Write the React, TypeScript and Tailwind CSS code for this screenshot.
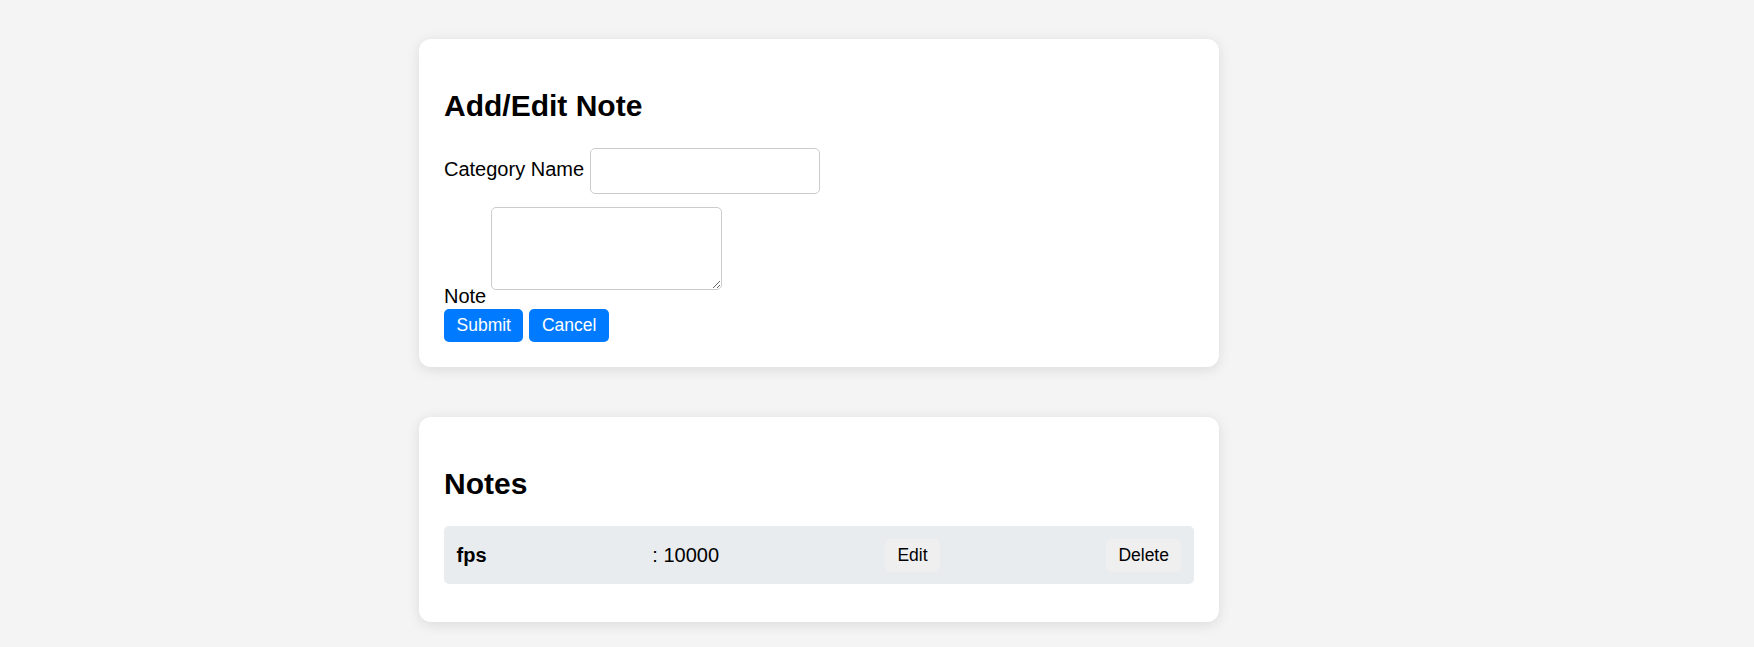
export default function App() {
  return (
    <div
      className="min-h-screen w-full bg-[#f4f4f4] text-black"
      style={{ fontFamily: '"Liberation Sans", Arial, sans-serif' }}
    >
      <div className="ml-[419px] w-[800px] pt-[39px] pb-[25px]">
        <div className="rounded-[12px] bg-white px-[25px] pt-[25px] pb-[25px] shadow-[0_2.5px_12.5px_rgba(0,0,0,0.1)]">
          <h2 className="my-[24.9px] text-[30px] font-bold leading-[34.5px]">Add/Edit Note</h2>
          <div className="flex items-start">
            <label className="mt-[9.3px] text-[20px] leading-[23px]">Category Name</label>
            <input
              type="text"
              className="ml-[5.5px] h-[46px] w-[230px] rounded-[5px] border border-[#cccccc] bg-white px-[10px] text-[20px] outline-none"
            />
          </div>
          <div className="mt-[13px] flex items-end">
            <label className="text-[20px] leading-[23px]">Note</label>
            <textarea className="mb-[17.6px] ml-[4.5px] h-[83px] w-[231px] rounded-[5px] border border-[#cccccc] bg-white px-[4px] text-[16px] outline-none" />
          </div>
          <div className="mt-[1px] flex gap-[6px]">
            <button className="h-[33px] rounded-[5px] bg-[#007bff] px-[12.5px] text-[17.5px] leading-[20px] text-white">
              Submit
            </button>
            <button className="h-[33px] rounded-[5px] bg-[#007bff] px-[12.5px] text-[17.5px] leading-[20px] text-white">
              Cancel
            </button>
          </div>
        </div>

        <div className="mt-[50px] rounded-[12px] bg-white px-[25px] pt-[25px] pb-[25px] shadow-[0_2.5px_12.5px_rgba(0,0,0,0.1)]">
          <h2 className="my-[24.9px] text-[30px] font-bold leading-[34.5px]">Notes</h2>
          <div className="mb-[12.5px] flex h-[58px] items-center justify-between rounded-[5px] bg-[#e9ecef] px-[12.5px]">
            <strong className="text-[20px] font-bold leading-[23px]">fps</strong>
            <span className="text-[20px] leading-[23px]">: 10000</span>
            <button className="h-[33px] rounded-[6px] bg-[#efefef] px-[12.5px] text-[17.5px] leading-[20px] text-black">
              Edit
            </button>
            <button className="h-[33px] rounded-[6px] bg-[#efefef] px-[12.5px] text-[17.5px] leading-[20px] text-black">
              Delete
            </button>
          </div>
        </div>
      </div>
    </div>
  );
}
